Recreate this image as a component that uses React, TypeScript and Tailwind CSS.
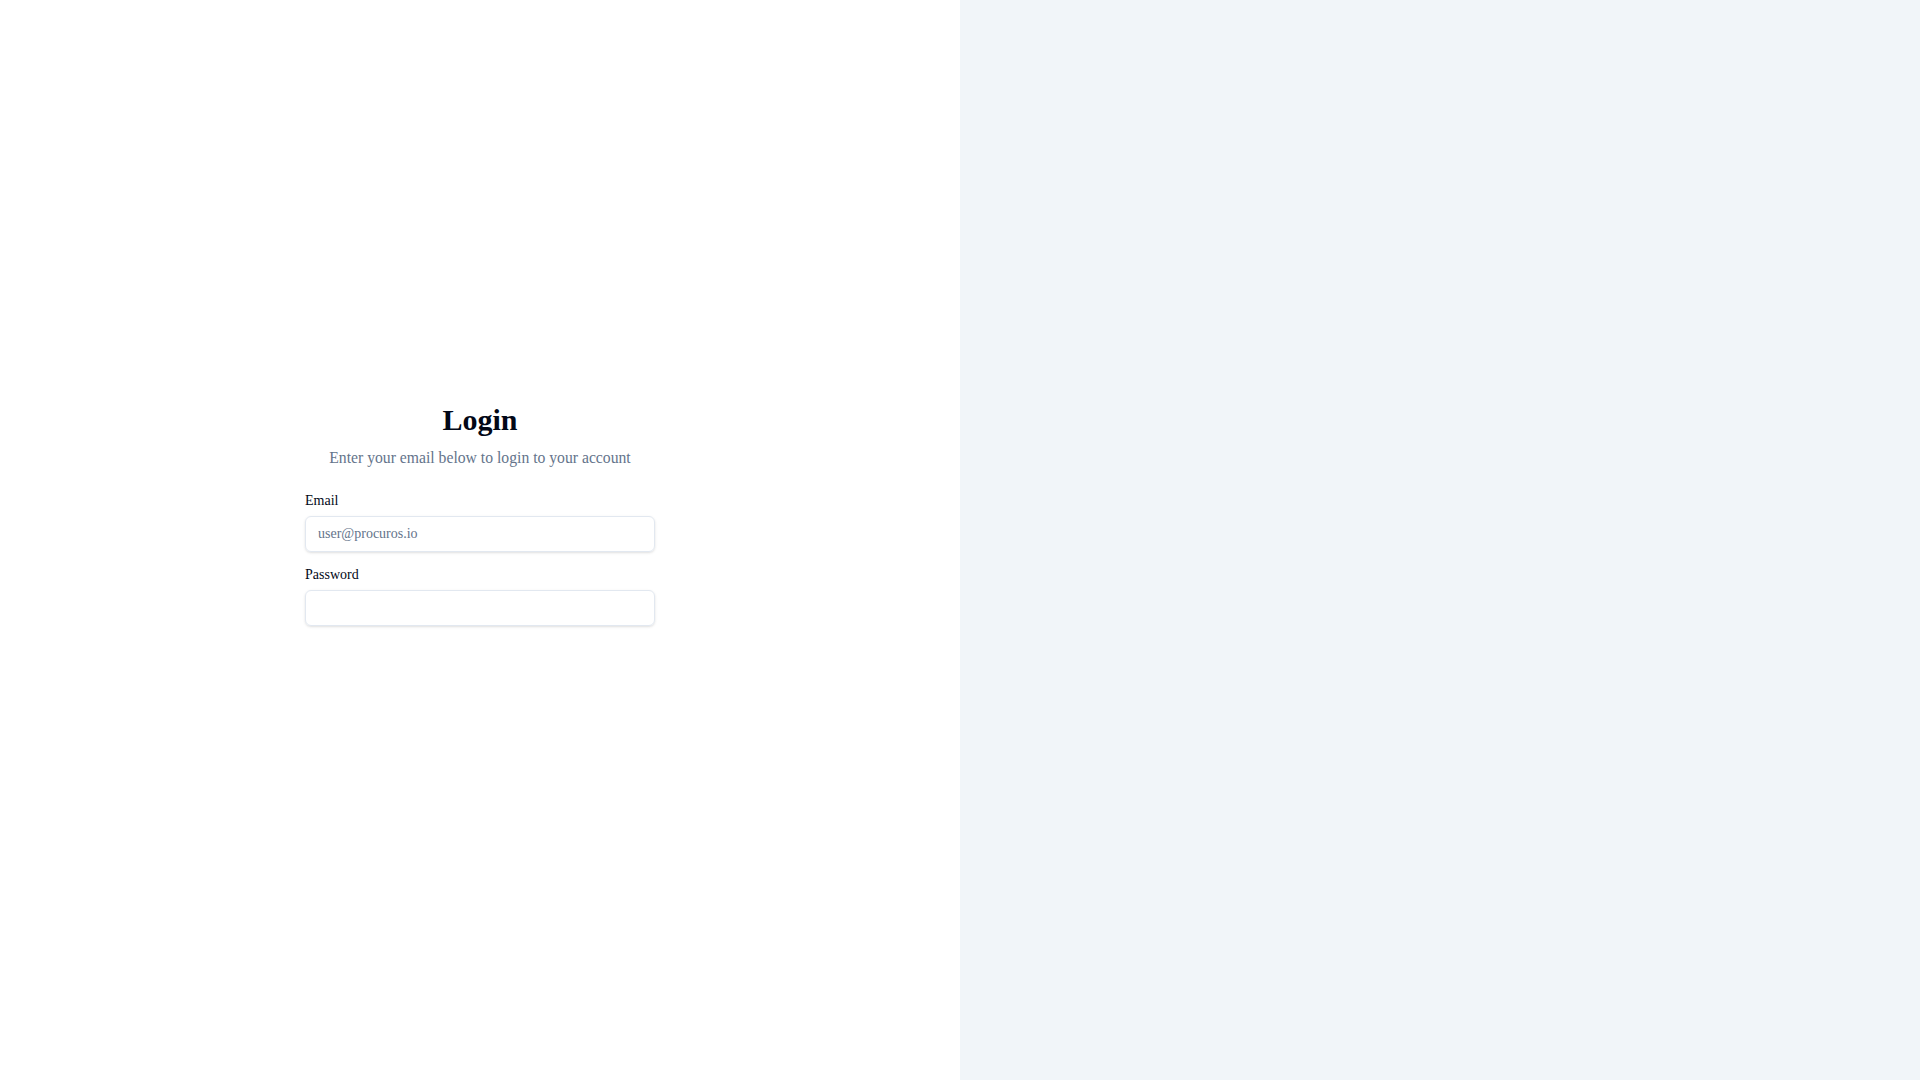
export default function App() {
  return (
    <div
      className="grid min-h-screen grid-cols-2 bg-white text-[#020817]"
      style={{ fontFamily: '"Liberation Serif", "Times New Roman", serif' }}
    >
      <div className="flex items-center justify-center pb-[53px]">
        <form className="flex w-[350px] flex-col gap-6">
          <div className="flex flex-col items-center gap-2 text-center">
            <h1 className="text-3xl font-bold">Login</h1>
            <p className="text-[15.7px] leading-6 text-[#64748b]">
              Enter your email below to login to your account
            </p>
          </div>
          <div className="flex flex-col gap-4">
            <div className="flex flex-col gap-2">
              <label htmlFor="email" className="text-sm leading-none font-medium">
                Email
              </label>
              <input
                id="email"
                type="email"
                placeholder="user@procuros.io"
                className="h-9 w-full rounded-md border border-[#e2e8f0] bg-transparent px-3 py-1 text-sm shadow-sm outline-none placeholder:text-[#64748b]"
              />
            </div>
            <div className="flex flex-col gap-2">
              <label htmlFor="password" className="text-sm leading-none font-medium">
                Password
              </label>
              <input
                id="password"
                type="password"
                className="h-9 w-full rounded-md border border-[#e2e8f0] bg-transparent px-3 py-1 text-sm shadow-sm outline-none"
              />
            </div>
          </div>
        </form>
      </div>
      <div className="bg-[#f1f5f9]" />
    </div>
  );
}
